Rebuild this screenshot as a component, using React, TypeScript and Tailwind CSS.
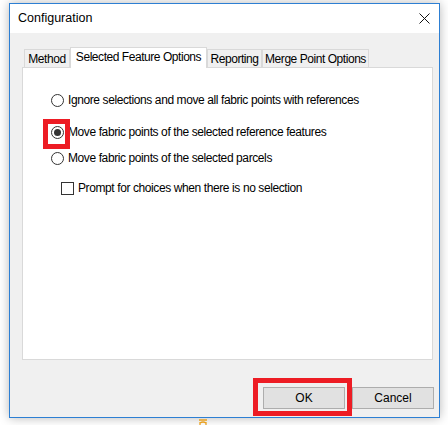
const tabs = [
  { label: "Method", width: "w-[46px]", selected: false },
  { label: "Selected Feature Options", width: "w-[137px]", selected: true },
  { label: "Reporting", width: "w-[55px]", selected: false },
  { label: "Merge Point Options", width: "w-[107px]", selected: false },
];

function Radio({ checked }: { checked?: boolean }) {
  return (
    <span className="w-[13px] h-[13px] shrink-0 rounded-full border border-[#333333] bg-white flex items-center justify-center">
      {checked && <span className="w-[7px] h-[7px] rounded-full bg-[#333333]" />}
    </span>
  );
}

function RedBox({ className }: { className: string }) {
  return <span className={"absolute border-[5px] border-[#ed1c24] pointer-events-none " + className} />;
}

export default function App() {
  return (
    <div
      className="w-[448px] h-[425px] bg-white overflow-hidden pl-[9px] pt-[3px] text-[12px] text-black"
      style={{ fontFamily: '"Liberation Sans", Arial, sans-serif' }}
    >
      <div className="w-[431px] h-[415px] border border-[#2d7fd3] flex flex-col shadow-[0_0_10px_rgba(0,0,0,0.28)]">
        {/* title bar */}
        <div className="h-[29px] bg-white flex items-center justify-between pl-[8px] pr-[9px]">
          <span className="text-[12.5px]">Configuration</span>
          <svg width="11" height="11" viewBox="0 0 11 11">
            <path d="M0.5 0.5 L10.5 10.5 M10.5 0.5 L0.5 10.5" stroke="#111" strokeWidth="1" />
          </svg>
        </div>

        {/* body */}
        <div className="flex-1 bg-[#f0f0f0] pt-[14px] pl-[12px] pr-[6px] flex flex-col">
          <div className="flex items-end ml-[2px] h-[20px] tracking-[-0.45px]">
            {tabs.map((t) =>
              t.selected ? (
                <div
                  key={t.label}
                  className={`${t.width} h-[21px] -mb-px relative z-10 bg-white border border-b-0 border-[#d9d9d9] flex items-center justify-center pb-[2px]`}
                >
                  {t.label}
                </div>
              ) : (
                <div
                  key={t.label}
                  className={`${t.width} h-[18px] bg-[#f0f0f0] border border-b-0 border-[#d9d9d9] flex items-center justify-center`}
                >
                  {t.label}
                </div>
              )
            )}
          </div>

          <div className="h-[293px] bg-white border border-[#d9d9d9] pt-[24px] pl-[28px] flex flex-col tracking-[-0.4px]">
            <div className="h-[16px] flex items-center gap-[4px]">
              <Radio />
              <span>Ignore selections and move all fabric points with references</span>
            </div>
            <div className="h-[16px] mt-[16px] flex items-center gap-[4px]">
              <span className="relative flex">
                <Radio checked />
                <RedBox className="-left-[8px] -top-[7px] -right-[6px] -bottom-[10px]" />
              </span>
              <span>Move fabric points of the selected reference features</span>
            </div>
            <div className="h-[16px] mt-[10px] flex items-center gap-[4px]">
              <Radio />
              <span>Move fabric points of the selected parcels</span>
            </div>
            <div className="h-[16px] mt-[14px] ml-[10px] flex items-center gap-[4px]">
              <span className="w-[13px] h-[13px] shrink-0 border border-[#333333] bg-white" />
              <span>Prompt for choices when there is no selection</span>
            </div>
          </div>

          <div className="flex justify-end gap-[7px] mt-[27px] -mr-[1px]">
            <div className="relative">
              <button className="w-[82px] h-[22px] bg-[#e1e1e1] border border-[#adadad] flex items-center justify-center">
                OK
              </button>
              <RedBox className="-left-[10px] -top-[9px] -right-[7px] -bottom-[7px]" />
            </div>
            <button className="w-[82px] h-[22px] bg-[#e1e1e1] border border-[#adadad] flex items-center justify-center">
              Cancel
            </button>
          </div>
        </div>
      </div>

      <div className="ml-[188px] mt-[1px]">
        <svg width="12" height="8" viewBox="0 0 12 8">
          <path d="M2 1 H10 M3 3 V8 M9 3 V8 M3 4 Q6 2 9 4" stroke="#e8a020" strokeWidth="1.3" fill="none" />
        </svg>
      </div>
    </div>
  );
}
